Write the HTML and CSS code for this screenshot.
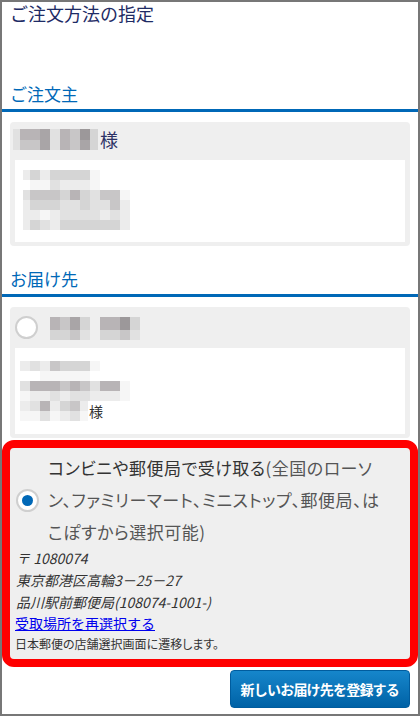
FILE: index.html
```html
<!DOCTYPE html>
<html lang="ja">
<head>
  <meta charset="UTF-8"/>
  <meta name="viewport" content="width=device-width,initial-scale=1.0"/>
  <title>ご注文方法の指定</title>
  <link rel="stylesheet" href="styles.css">
</head>
<body>
  <div class="page">
    <h1 class="page-title">ご注文方法の指定</h1>

    <!-- ご注文主 -->
    <section class="block block-orderer">
      <h2 class="block-title">ご注文主</h2>
      <div class="card">
        <div class="card-head">
          <div class="mosaic name-a">
            <i class="t2"></i><i class="t5"></i><i class="t5"></i><i class="t6"></i><i class="t2"></i><i class="t5"></i><i class="t4"></i><i class="t7"></i><i class="t3"></i>
            <i class="t2"></i><i class="t4"></i><i class="t4"></i><i class="t6"></i><i class="t2"></i><i class="t5"></i><i class="t4"></i><i class="t6"></i><i class="t3"></i>
          </div>
          <span class="honorific">様</span>
        </div>
        <div class="card-body">
          <div class="mosaic addr-a">
            <i class="t1"></i><i class="t3"></i><i class="t1"></i><i class="t3"></i><i class="t3"></i><i class="t3"></i><i class="t3"></i><i class="t0"></i><i></i><i></i><i></i>
            <i></i><i class="t0"></i><i class="t0"></i><i class="t2"></i><i class="t1"></i><i class="t1"></i><i class="t1"></i><i class="t0"></i><i></i><i></i><i></i>
            <i class="t2"></i><i class="t4"></i><i class="t4"></i><i class="t4"></i><i class="t3"></i><i class="t5"></i><i class="t3"></i><i class="t2"></i><i class="t4"></i><i class="t4"></i><i class="t0"></i>
            <i class="t1"></i><i class="t3"></i><i class="t3"></i><i class="t3"></i><i class="t2"></i><i class="t2"></i><i class="t3"></i><i class="t2"></i><i class="t2"></i><i class="t4"></i><i class="t1"></i>
            <i class="t1"></i><i class="t1"></i><i class="t0"></i><i class="t1"></i><i class="t2"></i><i class="t2"></i><i class="t2"></i><i class="t2"></i><i class="t1"></i><i class="t2"></i><i class="t1"></i>
            <i class="t1"></i><i class="t3"></i><i class="t2"></i><i class="t1"></i><i class="t3"></i><i class="t3"></i><i class="t3"></i><i class="t3"></i><i class="t3"></i><i class="t3"></i><i class="t1"></i>
          </div>
        </div>
      </div>
    </section>

    <!-- お届け先 -->
    <section class="block block-delivery">
      <h2 class="block-title">お届け先</h2>

      <div class="card card-address">
        <label class="card-head">
          <span class="radio"></span>
          <span class="mosaic name-b">
            <i class="t5"></i><i class="t4"></i><i class="t6"></i><i class="t3"></i>
            <i class="t3"></i><i class="t3"></i><i class="t4"></i><i class="t2"></i>
          </span>
          <span class="mosaic name-b">
            <i class="t5"></i><i class="t5"></i><i class="t7"></i><i class="t3"></i>
            <i class="t3"></i><i class="t3"></i><i class="t4"></i><i class="t2"></i>
          </span>
        </label>
        <div class="card-body">
          <div class="mosaic addr-b">
            <i class="t1"></i><i class="t2"></i><i class="t1"></i><i class="t4"></i><i class="t3"></i><i class="t3"></i><i class="t3"></i><i class="t0"></i><i></i><i></i><i></i>
            <i></i><i></i><i class="t0"></i><i class="t0"></i><i class="t0"></i><i class="t0"></i><i class="t0"></i><i></i><i></i><i></i><i></i>
            <i class="t2"></i><i class="t5"></i><i class="t5"></i><i class="t5"></i><i class="t4"></i><i class="t5"></i><i class="t4"></i><i class="t2"></i><i class="t5"></i><i class="t5"></i><i class="t0"></i>
            <i class="t0"></i><i class="t1"></i><i class="t1"></i><i class="t2"></i><i class="t1"></i><i class="t2"></i><i class="t2"></i><i class="t1"></i><i class="t1"></i><i class="t1"></i><i class="t0"></i>
          </div>
          <div class="addr-last">
            <div class="mosaic addr-b-tail">
              <i class="t1"></i><i class="t2"></i><i class="t5"></i><i class="t1"></i><i class="t3"></i><i class="t4"></i><i class="t1"></i>
              <i class="t0"></i><i class="t0"></i><i class="t2"></i><i class="t0"></i><i class="t1"></i><i class="t2"></i><i class="t0"></i>
            </div>
            <span class="honorific-sm">様</span>
          </div>
        </div>
      </div>

      <div class="card card-pickup">
        <label class="pickup-row">
          <span class="radio is-checked"></span>
          <span class="pickup-label"><span class="pickup-main">コンビニや郵便局で受け取る</span>(全国のローソ<br>ン、ファミリーマート、ミニストップ、郵便局、は<br>こぽすから選択可能)</span>
        </label>
        <address class="pickup-addr">〒 1080074<br>東京都港区高輪3－25－27<br>品川駅前郵便局(108074-1001-)</address>
        <a class="pickup-link" href="#">受取場所を再選択する</a>
        <p class="pickup-note">日本郵便の店舗選択画面に遷移します。</p>
      </div>
    </section>

    <div class="actions">
      <button type="button" class="btn-primary">新しいお届け先を登録する</button>
    </div>
  </div>
</body>
</html>
```

FILE: styles.css
```css
:root {
  --blue:       #0068b7;
  --navy:       #1e2b65;
  --card-bg:    #efefef;
  --text:       #333333;
  --border:     #777777;
}
* { margin:0; padding:0; box-sizing:border-box; }
html, body {
  background:#fff; color:var(--text);
  font-family:"Noto Sans CJK JP","Noto Sans",sans-serif;
}

.page {
  height:716px; overflow:hidden;
  border:2px solid var(--border);
}

/* ─── HEADINGS ───────────────────── */
.page-title {
  font-size:18px; line-height:23px; font-weight:normal;
  color:var(--navy); padding-left:8px;
}
.block-title {
  font-size:17px; line-height:22px; font-weight:normal;
  color:var(--blue);
  padding:0 0 4px 8px;
  border-bottom:3px solid var(--blue);
  margin-bottom:10px;
}
.block-orderer { margin-top:58px; }
.block-delivery { margin-top:22px; }

/* ─── CARDS ──────────────────────── */
.card {
  background:var(--card-bg); border-radius:4px;
  margin:0 8px; padding:0 5px 4px;
}
.card + .card { margin-top:10px; }
.card-head {
  display:flex; align-items:flex-start;
  height:38px; padding-top:7px;
}
.block-orderer .card-head { margin-left:-2px; }
.card-body { background:#fff; }
.block-orderer .card-body { padding:10px 0 12px 8px; }
.card-address .card-head { height:41px; padding-top:9px; gap:12px; cursor:pointer; }
.card-address .card-body { padding:13px 0 13px 5px; }

.honorific {
  font-size:18px; line-height:21px; color:#2c3266;
  margin-left:2px;
}
.honorific-sm {
  font-size:14px; line-height:20px; color:var(--text);
  margin-left:1px;
}
.addr-last { display:flex; align-items:center; }

/* blurred personal data */
.mosaic { display:grid; }
.mosaic i { display:block; }
.name-a { grid-template-columns:7px repeat(7,10px) 8px; grid-template-rows:11px 10px; }
.addr-a { grid-template-columns:7px repeat(10,10px); grid-auto-rows:10px; }
.name-b { grid-template-columns:repeat(4,10px); grid-template-rows:13px 10px; margin-top:1px; }
.name-b + .name-b { margin-left:-2px; }
.addr-b { grid-template-columns:repeat(11,10px); grid-auto-rows:10px; }
.addr-b-tail { grid-template-columns:repeat(6,10px) 8px; grid-auto-rows:10px; }
.t0 { background:#f6f6f6; }
.t1 { background:#ececec; }
.t2 { background:#e1e1e1; }
.t3 { background:#d5d5d5; }
.t4 { background:#c8c6c7; }
.t5 { background:#b8b4b6; }
.t6 { background:#a9a5a7; }
.t7 { background:#9c989a; }

/* ─── RADIO ──────────────────────── */
.radio {
  flex:none; width:23px; height:23px;
  border:2px solid #cfcfcf; border-radius:50%;
  background:#fff;
  display:flex; align-items:center; justify-content:center;
}
.radio.is-checked::after {
  content:""; width:11px; height:11px;
  border-radius:50%; background:var(--blue);
}

/* ─── PICKUP (selected) ──────────── */
.card-pickup {
  padding:4px 6px 5px 5px;
  outline:8px solid #ff0000;
}
.pickup-row {
  display:flex; align-items:center; gap:9px;
  padding-left:1px; cursor:pointer;
}
.pickup-label {
  font-size:17px; line-height:32px; color:#555;
  font-feature-settings:"palt"; letter-spacing:0.5px;
}
.pickup-main { color:#333; }
.pickup-addr {
  font-size:14px; line-height:22px; font-style:italic;
  padding-left:1px; margin-top:-1px;
}
.pickup-link {
  display:block; font-size:14px; line-height:20px;
  color:#0000ee; text-decoration:underline;
}
.pickup-note {
  font-size:12px; line-height:21px;
  font-feature-settings:"palt";
}

/* ─── ACTIONS ────────────────────── */
.actions {
  display:flex; justify-content:flex-end;
  padding:11px 8px 0;
}
.btn-primary {
  height:38px; padding:0 10px;
  border:1px solid #005c9e; border-radius:4px;
  background:linear-gradient(#1686cb,#0062a6);
  color:#fff; font-family:inherit;
  font-size:14px; font-weight:bold; letter-spacing:-0.8px;
  cursor:pointer;
}
```
